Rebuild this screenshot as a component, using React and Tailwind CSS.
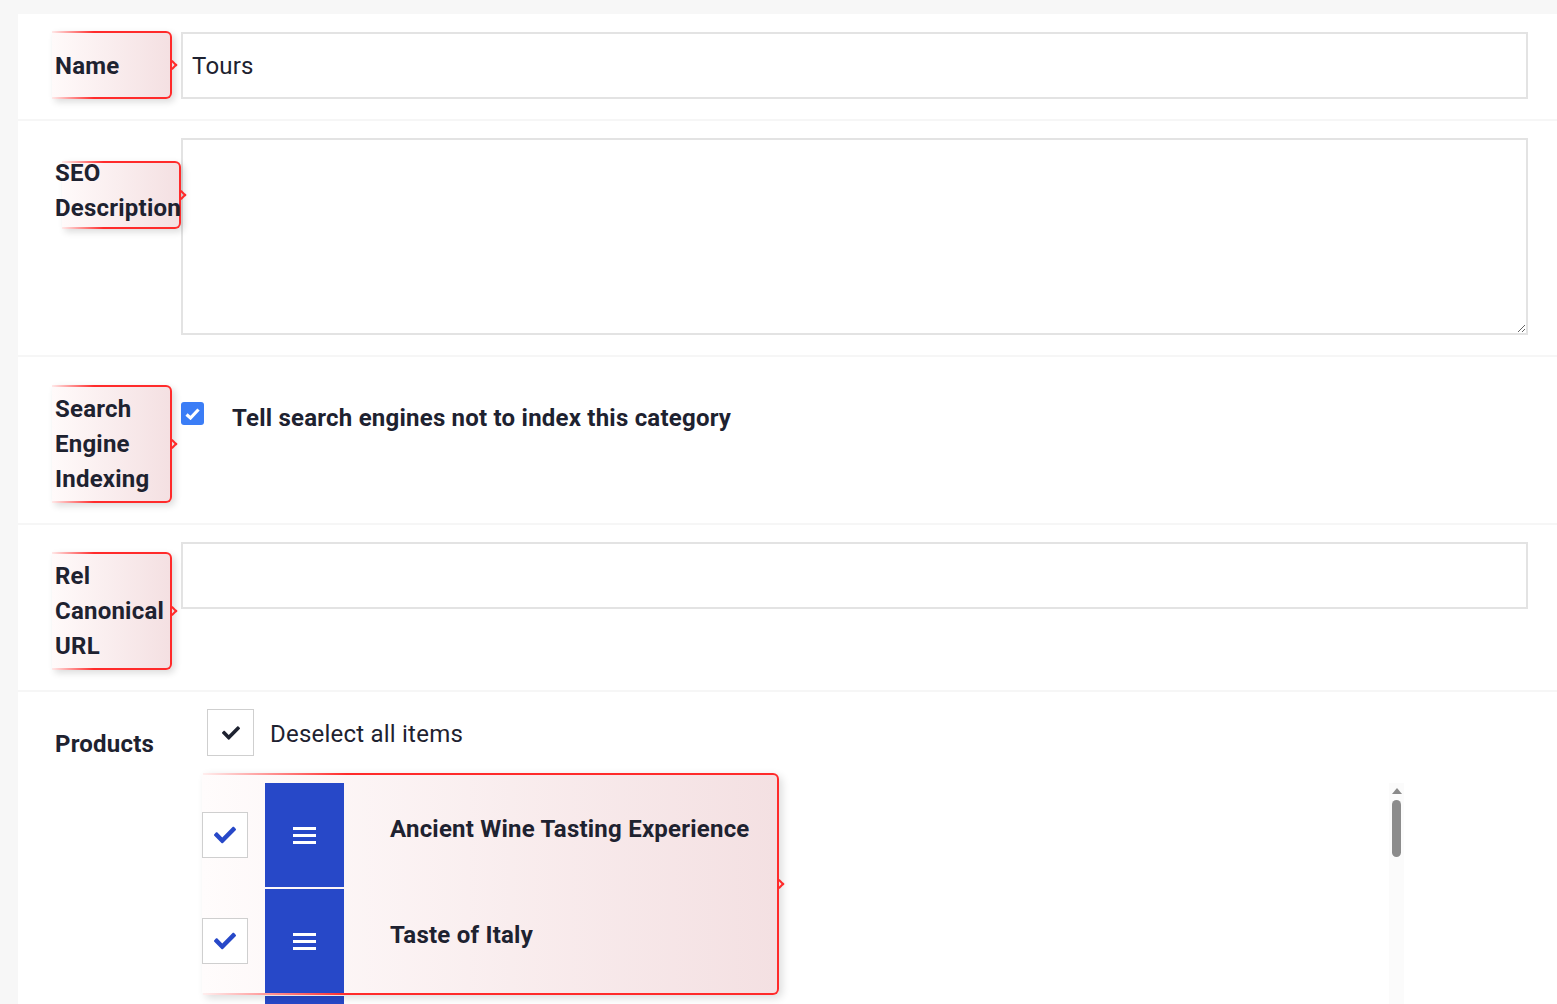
import React from 'react'
import { FaCheck } from 'react-icons/fa'

const font = { fontFamily: 'Roboto, "Liberation Sans", sans-serif' }

const Tag = ({ className = '', children, textClass = '' }) => (
  <div
    className={`relative shrink-0 rounded-r-[6px] bg-[linear-gradient(to_right,rgba(255,40,40,0.1),#ff2b2b_35%)] py-[2px] pr-[2px] shadow-[3px_3px_7px_rgba(0,0,0,0.14)] ${className}`}
  >
    <div className="flex h-full items-center rounded-r-[4px] bg-[linear-gradient(to_right,#fffafa,#f4e0e2)]">
      <div className={`text-[24px] font-bold leading-[35px] text-[#1e2230] ${textClass}`}>{children}</div>
    </div>
    <span className="absolute right-[-4px] top-1/2 h-[7px] w-[7px] -translate-y-1/2 rotate-45 border-t-2 border-r-2 border-[#ff2b2b]" />
  </div>
)

const Row = ({ children }) => (
  <div className="flex items-start border-b-2 border-[#f6f6f6] pt-[17px] pb-[20px] pr-[29px]">{children}</div>
)

const Hamburger = () => (
  <div className="flex flex-col gap-[4px]">
    <span className="h-[3px] w-[23px] bg-white" />
    <span className="h-[3px] w-[23px] bg-white" />
    <span className="h-[3px] w-[23px] bg-white" />
  </div>
)

const Item = ({ title }) => (
  <div className="flex h-[104px] items-center">
    <div className="flex h-[46px] w-[46px] shrink-0 items-center justify-center border border-[#cfcfcf] bg-white">
      <FaCheck size={22} color="#2748c8" />
    </div>
    <div className="ml-[17px] flex h-full w-[79px] shrink-0 items-center justify-center bg-[#2748c8]">
      <Hamburger />
    </div>
    <div className="mb-[13px] ml-[46px] text-[24px] font-bold text-[#1e2230]">{title}</div>
  </div>
)

export default function App() {
  return (
    <div className="h-[1004px] overflow-hidden bg-[#f7f7f7] pl-[18px] pt-[14px] tracking-[0.22px]" style={font}>
      <div className="bg-white">
        <Row>
          <Tag className="ml-[34px] h-[68px] w-[120px]" textClass="pl-[3px] mt-[2px]">Name</Tag>
          <input
            readOnly
            value="Tours"
            className="ml-[9px] mt-[1px] h-[67px] flex-1 border-2 border-[#e3e3e3] px-[9px] text-[24px] text-[#1e2230] outline-none"
          />
        </Row>

        <Row>
          <Tag className="ml-[44px] mt-[23px] h-[68px] w-[119px]" textClass="-ml-[7px] relative -top-[4px]">SEO Description</Tag>
          <textarea className="h-[197px] flex-1 border-2 border-[#e3e3e3] px-[9px] text-[24px] outline-none" />
        </Row>

        <Row>
          <Tag className="ml-[34px] mt-[11px] h-[118px] w-[120px]" textClass="pl-[3px]">
            Search Engine Indexing
          </Tag>
          <div className="ml-[9px] mt-[28px] flex h-[23px] w-[23px] shrink-0 items-center justify-center rounded-[3px] bg-[#3b7df6]">
            <svg width="15" height="12" viewBox="0 0 15 12">
              <path d="M1.5 6.5 L5.5 10 L13.5 1.5" fill="none" stroke="white" strokeWidth="3.2" />
            </svg>
          </div>
          <div className="ml-[28px] mt-[27px] text-[24px] font-bold leading-[35px] text-[#1e2230]">
            Tell search engines not to index this category
          </div>
        </Row>

        <Row>
          <Tag className="ml-[34px] mt-[10px] h-[118px] w-[120px]" textClass="pl-[3px]">
            Rel Canonical URL
          </Tag>
          <input
            readOnly
            value=""
            className="ml-[9px] h-[67px] flex-1 border-2 border-[#e3e3e3] px-[9px] text-[24px] outline-none"
          />
        </Row>

        <div className="flex items-start pt-[17px]">
          <div className="ml-[37px] mt-[18px] w-[147px] shrink-0 text-[24px] font-bold leading-[35px] text-[#1e2230]">
            Products
          </div>
          <div className="flex-1">
            <div className="ml-[5px] flex items-center">
              <div className="flex h-[47px] w-[47px] items-center justify-center border border-[#cfcfcf]">
                <FaCheck size={18} color="#1e2230" />
              </div>
              <span className="ml-[16px] mt-[3px] text-[24px] text-[#1e2230]">Deselect all items</span>
            </div>

            <div className="mt-[17px] flex items-start">
              <div className="w-[1186px]">
                <div className="relative ml-px w-[576px] rounded-r-[6px] bg-[linear-gradient(to_right,rgba(255,40,40,0.08),#ff2b2b_25%)] py-[2px] pr-[2px] shadow-[3px_3px_8px_rgba(0,0,0,0.14)]">
                  <div className="-ml-px rounded-r-[4px] bg-[linear-gradient(to_right,#fffcfc,#f4e0e2)] pt-[8px]">
                    <Item title="Ancient Wine Tasting Experience" />
                    <div className="h-[2px] bg-transparent" />
                    <Item title="Taste of Italy" />
                  </div>
                  <span className="absolute right-[-4px] top-1/2 h-[7px] w-[7px] -translate-y-1/2 rotate-45 border-t-2 border-r-2 border-[#ff2b2b]" />
                </div>
                <div className="mt-[1px] flex">
                  <div className="ml-[63px] h-[104px] w-[79px] bg-[#2748c8]" />
                </div>
              </div>
              <div className="ml-[1px] mt-[10px] flex h-[400px] w-[15px] flex-col items-center bg-[#fbfbfb]">
                <span className="mt-[5px] h-0 w-0 border-x-[5px] border-b-[6px] border-x-transparent border-b-[#8a8a8a]" />
                <span className="mt-[6px] h-[57px] w-[9px] rounded-full bg-[#8c8c8c]" />
              </div>
            </div>
          </div>
        </div>
      </div>
    </div>
  )
}
